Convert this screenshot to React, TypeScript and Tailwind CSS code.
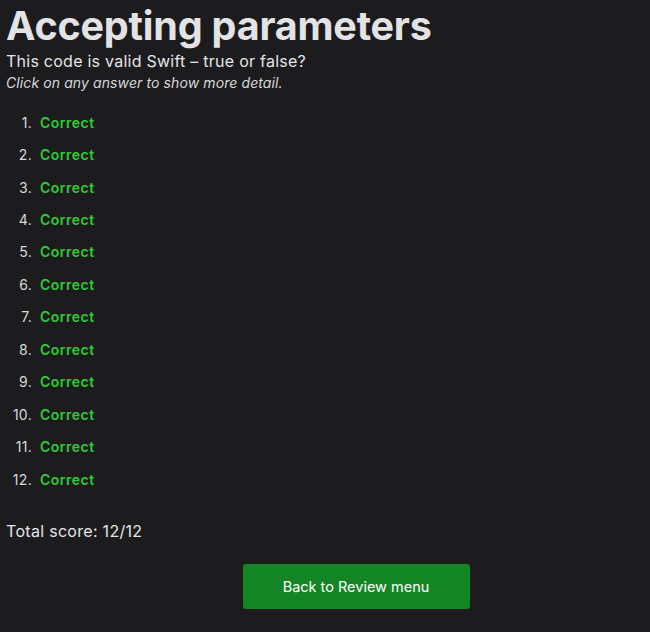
import React from "react";

export default function App() {
  const items = Array.from({ length: 12 }, (_, i) => i + 1);
  return (
    <div
      className="w-[650px] h-[632px] bg-[#1c1c1e] text-[#e5e5e7] overflow-hidden px-[6px]"
      style={{ fontFamily: "Inter, 'Noto Sans', sans-serif" }}
    >
      <h1 className="text-[39.5px] font-bold leading-[48px] tracking-[-0.2px] pt-[2px] text-[#e3e3e5]">
        Accepting parameters
      </h1>
      <p className="text-[16px] leading-[24px] -mt-[1px] tracking-[0.25px]">This code is valid Swift – true or false?</p>
      <p className="text-[14px] italic leading-[20px] tracking-[0.1px] text-[#d8d8da]">Click on any answer to show more detail.</p>
      <ol className="mt-[13px] flex flex-col">
        {items.map((n) => (
          <li key={n} className="flex h-[32.45px] items-center text-[14px]">
            <span className="w-[26px] text-right text-[#d8d8da] tracking-[0.3px]">{n}.</span>
            <span className="ml-[8px] font-semibold text-[#2fcd33] tracking-[0.5px]">Correct</span>
          </li>
        ))}
      </ol>
      <p className="mt-[24px] text-[16px] leading-[24px] tracking-[0.3px]">Total score: 12/12</p>
      <div className="mt-[21px] flex justify-center pl-[62px]">
        <button className="w-[227px] h-[45px] rounded-[3px] bg-[#138524] text-white text-[14.5px] tracking-[0px]">
          Back to Review menu
        </button>
      </div>
    </div>
  );
}
